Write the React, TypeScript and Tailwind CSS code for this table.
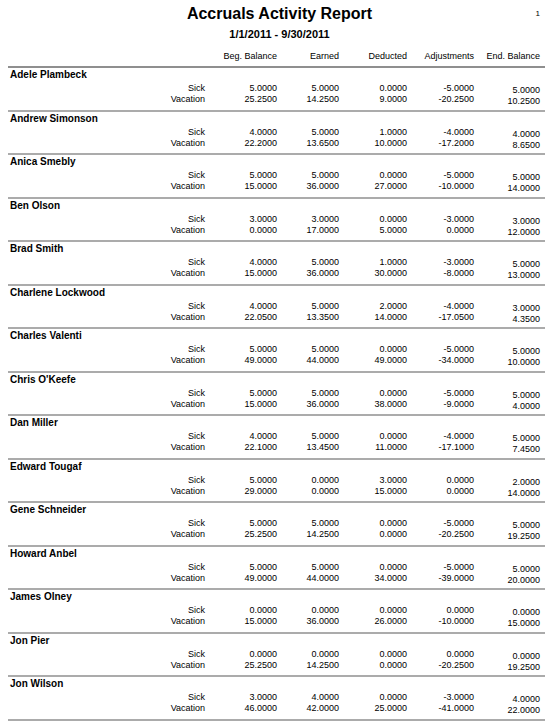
import React from 'react';

type Row = readonly [string, string, string, string, string];

interface Person {
  readonly name: string;
  readonly sick: Row;
  readonly vacation: Row;
}

const people: Person[] = [
  { name: 'Adele Plambeck', sick: ['5.0000', '5.0000', '0.0000', '-5.0000', '5.0000'], vacation: ['25.2500', '14.2500', '9.0000', '-20.2500', '10.2500'] },
  { name: 'Andrew Simonson', sick: ['4.0000', '5.0000', '1.0000', '-4.0000', '4.0000'], vacation: ['22.2000', '13.6500', '10.0000', '-17.2000', '8.6500'] },
  { name: 'Anica Smebly', sick: ['5.0000', '5.0000', '0.0000', '-5.0000', '5.0000'], vacation: ['15.0000', '36.0000', '27.0000', '-10.0000', '14.0000'] },
  { name: 'Ben Olson', sick: ['3.0000', '3.0000', '0.0000', '-3.0000', '3.0000'], vacation: ['0.0000', '17.0000', '5.0000', '0.0000', '12.0000'] },
  { name: 'Brad Smith', sick: ['4.0000', '5.0000', '1.0000', '-3.0000', '5.0000'], vacation: ['15.0000', '36.0000', '30.0000', '-8.0000', '13.0000'] },
  { name: 'Charlene Lockwood', sick: ['4.0000', '5.0000', '2.0000', '-4.0000', '3.0000'], vacation: ['22.0500', '13.3500', '14.0000', '-17.0500', '4.3500'] },
  { name: 'Charles Valenti', sick: ['5.0000', '5.0000', '0.0000', '-5.0000', '5.0000'], vacation: ['49.0000', '44.0000', '49.0000', '-34.0000', '10.0000'] },
  { name: "Chris O'Keefe", sick: ['5.0000', '5.0000', '0.0000', '-5.0000', '5.0000'], vacation: ['15.0000', '36.0000', '38.0000', '-9.0000', '4.0000'] },
  { name: 'Dan Miller', sick: ['4.0000', '5.0000', '0.0000', '-4.0000', '5.0000'], vacation: ['22.1000', '13.4500', '11.0000', '-17.1000', '7.4500'] },
  { name: 'Edward Tougaf', sick: ['5.0000', '0.0000', '3.0000', '0.0000', '2.0000'], vacation: ['29.0000', '0.0000', '15.0000', '0.0000', '14.0000'] },
  { name: 'Gene Schneider', sick: ['5.0000', '5.0000', '0.0000', '-5.0000', '5.0000'], vacation: ['25.2500', '14.2500', '0.0000', '-20.2500', '19.2500'] },
  { name: 'Howard Anbel', sick: ['5.0000', '5.0000', '0.0000', '-5.0000', '5.0000'], vacation: ['49.0000', '44.0000', '34.0000', '-39.0000', '20.0000'] },
  { name: 'James Olney', sick: ['0.0000', '0.0000', '0.0000', '0.0000', '0.0000'], vacation: ['15.0000', '36.0000', '26.0000', '-10.0000', '15.0000'] },
  { name: 'Jon Pier', sick: ['0.0000', '0.0000', '0.0000', '0.0000', '0.0000'], vacation: ['25.2500', '14.2500', '0.0000', '-20.2500', '19.2500'] },
  { name: 'Jon Wilson', sick: ['3.0000', '4.0000', '0.0000', '-3.0000', '4.0000'], vacation: ['46.0000', '42.0000', '25.0000', '-41.0000', '22.0000'] },
];

const headers = ['Beg. Balance', 'Earned', 'Deducted', 'Adjustments', 'End. Balance'];

const cols = 'grid grid-cols-[197px_72px_62px_68px_67px_66px]';

function PersonBlock({ person }: { person: Person }) {
  return (
    <div className="h-[43.5px] border-b-2 border-[#ababab]">
      <div className="pt-[1px] pl-[2px] text-[10px] leading-[12px] font-bold">{person.name}</div>
      <div className={`${cols} mt-[2px] text-[9px] leading-[11px]`}>
        <div className="text-right">
          <div>Sick</div>
          <div>Vacation</div>
        </div>
        {[0, 1, 2, 3].map((i) => (
          <div key={i} className="text-right">
            <div>{person.sick[i]}</div>
            <div>{person.vacation[i]}</div>
          </div>
        ))}
        <div className="text-right pt-[2px]">
          <div>{person.sick[4]}</div>
          <div>{person.vacation[4]}</div>
        </div>
      </div>
    </div>
  );
}

export default function App() {
  return (
    <div className="w-[559px] h-[726px] overflow-hidden bg-white text-black font-['Liberation_Sans',Arial,sans-serif]">
      <div className="grid grid-cols-[1fr_auto_1fr] items-center pt-[4px]">
        <div />
        <h1 className="text-[16px] leading-[20px] font-bold">Accruals Activity Report</h1>
        <div className="text-right pr-[19px] text-[8px] leading-[10px]">1</div>
      </div>
      <div className="mt-[3px] text-center text-[11px] leading-[14px] font-bold">1/1/2011 - 9/30/2011</div>
      <div className="ml-[8px] w-[537px]">
        <div className={`${cols} mt-[9px] pb-[4px] text-[9px] leading-[12px] border-b-2 border-[#8f8f8f]`}>
          <div />
          {headers.map((h) => (
            <div key={h} className="text-right">{h}</div>
          ))}
        </div>
        {people.map((p) => (
          <PersonBlock key={p.name} person={p} />
        ))}
      </div>
    </div>
  );
}
